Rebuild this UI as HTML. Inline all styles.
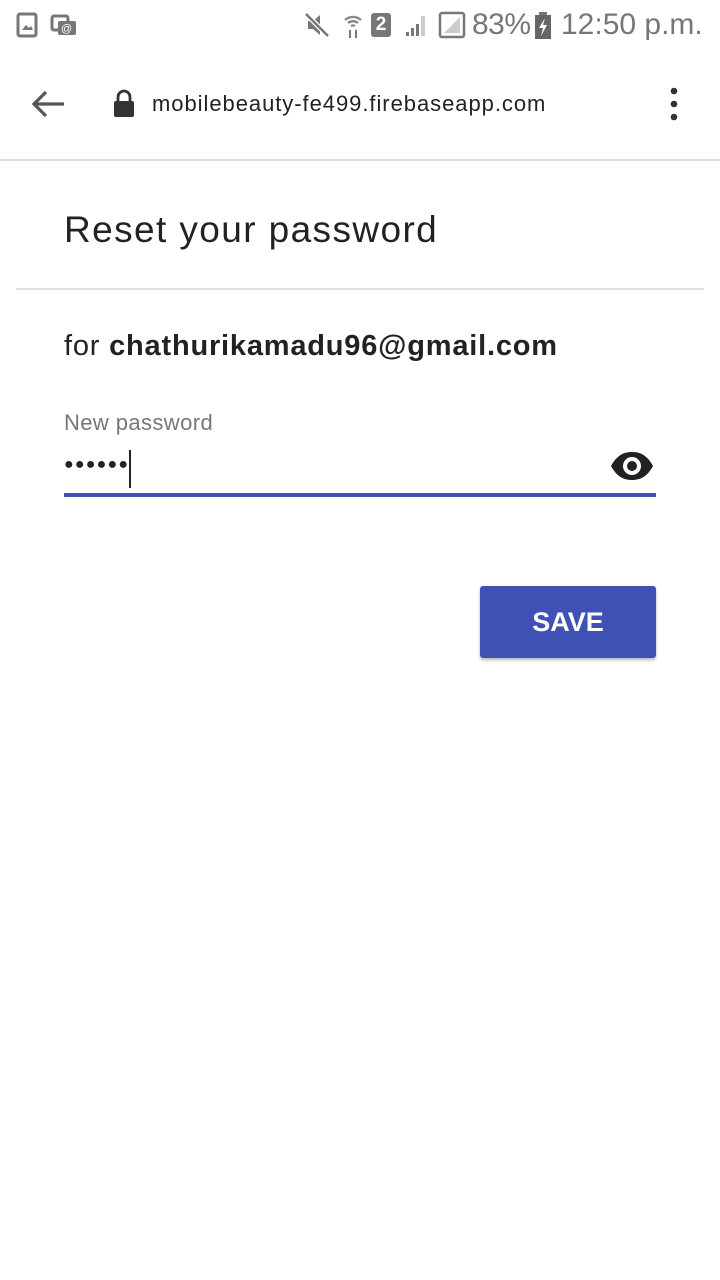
<!DOCTYPE html>
<html><head><meta charset="utf-8"><style>
*{margin:0;padding:0;box-sizing:border-box}
body{width:720px;height:1280px;background:#fff;font-family:"Liberation Sans",sans-serif;position:relative;overflow:hidden}
.a{position:absolute;white-space:nowrap}
</style></head><body>
<!-- status bar -->
<svg class="a" style="left:16px;top:12px" width="24" height="26"><rect x="2" y="2" width="18" height="22" rx="2" fill="none" stroke="#777" stroke-width="3"/><path d="M6 18 L10 13 L13 16 L15 14 L17 18Z" fill="#777"/></svg>
<svg class="a" style="left:50px;top:14px" width="28" height="22"><rect x="2" y="2" width="16" height="14" rx="2" fill="none" stroke="#777" stroke-width="3"/><rect x="8" y="7" width="18" height="14" rx="2" fill="#777"/><text x="11" y="18" font-size="11" fill="#fff" font-family="Liberation Sans">@</text></svg>
<svg class="a" style="left:304px;top:12px" width="26" height="26"><path d="M4 9h5l7-6v20l-7-6H4z" fill="#777"/><path d="M2 2L24 24" stroke="#fff" stroke-width="5"/><path d="M2 2L24 24" stroke="#777" stroke-width="2.5"/></svg>
<svg class="a" style="left:343px;top:12px" width="20" height="26"><path d="M2 8a12 12 0 0 1 16 0M5 11a8 8 0 0 1 10 0M8 14a4 4 0 0 1 4 0" stroke="#888" stroke-width="2.4" fill="none"/><path d="M7 18v8M13 18v8" stroke="#777" stroke-width="2"/></svg>
<div class="a" style="left:371px;top:13px;width:20px;height:24px;background:#777;border-radius:3px;color:#fff;font-weight:bold;font-size:19px;text-align:center;line-height:24px">2</div>
<svg class="a" style="left:404px;top:14px" width="26" height="24"><path d="M2 22h3v-4H2zM7 22h3v-8H7zM12 22h3v-12h-3z" fill="#777"/><path d="M17 22h4V2h-4z" fill="#ccc"/></svg>
<svg class="a" style="left:438px;top:11px" width="28" height="28"><rect x="2" y="2" width="24" height="24" rx="2" fill="none" stroke="#777" stroke-width="2.5"/><path d="M6 22L22 6V22Z" fill="#ccc"/></svg>
<div class="a" style="left:472px;top:8px;font-size:30px;color:#777;letter-spacing:-0.5px">83%</div>
<svg class="a" style="left:534px;top:12px" width="18" height="28"><rect x="5" y="0" width="8" height="3" fill="#777"/><rect x="1" y="3" width="16" height="24" fill="#666"/><path d="M11 6L5 16h4l-2 8 6-11H9z" fill="#fff"/></svg>
<div class="a" style="left:561px;top:8px;font-size:30px;color:#777">12:50 p.m.</div>
<!-- url bar -->
<svg class="a" style="left:30px;top:88px" width="36" height="32"><path d="M34 16H4M16 4L4 16l12 12" stroke="#555" stroke-width="3.2" fill="none"/></svg>
<svg class="a" style="left:112px;top:89px" width="24" height="30"><path d="M6 12V8a6 6 0 0 1 12 0v4" stroke="#333" stroke-width="2.8" fill="none"/><rect x="2" y="12" width="20" height="16" rx="2" fill="#333"/></svg>
<div class="a" style="left:152px;top:91px;font-size:22px;color:#222;letter-spacing:0.95px">mobilebeauty-fe499.firebaseapp.com</div>
<svg class="a" style="left:666px;top:86px" width="16" height="36"><circle cx="8" cy="5" r="3.3" fill="#333"/><circle cx="8" cy="18" r="3.3" fill="#333"/><circle cx="8" cy="31" r="3.3" fill="#333"/></svg>
<div class="a" style="left:0;top:159px;width:720px;height:2px;background:#ddd"></div>
<!-- content -->
<div class="a" style="left:64px;top:209px;font-size:37px;color:#222;letter-spacing:1.4px">Reset your password</div>
<div class="a" style="left:16px;top:288px;width:688px;height:2px;background:#e0e0e0"></div>
<div class="a" style="left:64px;top:330px;font-size:29px;color:#222;letter-spacing:0.8px">for <b>chathurikamadu96@gmail.com</b></div>
<div class="a" style="left:64px;top:410px;font-size:22px;color:#777;letter-spacing:0.4px">New password</div>
<div class="a" style="left:64px;top:456px;font-size:16px;color:#222;letter-spacing:1.2px">●●●●●●</div>
<div class="a" style="left:129px;top:450px;width:2px;height:38px;background:#222"></div>
<svg class="a" style="left:609px;top:450px" width="46" height="32"><path d="M2 16C8 5 15 2 23 2s15 3 21 14C38 27 31 30 23 30S8 27 2 16Z" fill="#222"/><circle cx="23" cy="16" r="9" fill="#fff"/><circle cx="23" cy="16" r="5" fill="#222"/></svg>
<div class="a" style="left:64px;top:493px;width:592px;height:4px;background:#3f51b5"></div>
<div class="a" style="left:480px;top:586px;width:176px;height:72px;background:#3f51b5;border-radius:3px;box-shadow:0 2px 3px rgba(0,0,0,.3);color:#fff;font-size:27px;font-weight:bold;text-align:center;line-height:72px">SAVE</div>
</body></html>
